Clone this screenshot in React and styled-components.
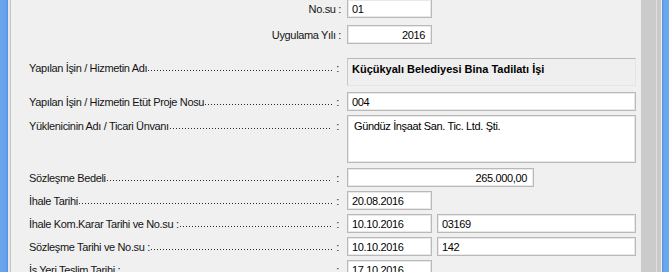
import React from 'react'
import styled, { createGlobalStyle } from 'styled-components'

const GlobalStyle = createGlobalStyle`
  html, body {
    margin: 0;
    padding: 0;
    overflow: hidden;
    background: #f0f0f0;
  }
  * { box-sizing: border-box; }
`

const Field = ({ label, children, top, height, align = 'center', labelTop = 0 }) => (
  <Row $top={top} $height={height} $align={align}>
    <LabelCell $labelTop={labelTop}>
      <LabelText>{label}</LabelText>
      <Dots />
      <Colon>:</Colon>
    </LabelCell>
    <Fields>{children}</Fields>
  </Row>
)

const App = () => {
  return (
    <Window>
      <GlobalStyle />
      <BlueFrame />
      <LeftEdge />
      <Content>
        <Row $top={-1} $height={19}>
          <RightLabel>No.su :</RightLabel>
          <Fields>
            <Input $w={85}>01</Input>
          </Fields>
        </Row>
        <Row $top={7} $height={19}>
          <RightLabel>Uygulama Yılı :</RightLabel>
          <Fields>
            <Input $w={85} $right>2016</Input>
          </Fields>
        </Row>

        <Field label="Yapılan İşin / Hizmetin Adı" top={14} height={28} align="flex-start" labelTop={4}>
          <Sunken>Küçükyalı Belediyesi Bina Tadilatı İşi</Sunken>
        </Field>

        <Field label="Yapılan İşin / Hizmetin Etüt Proje Nosu" top={6} height={19}>
          <Input $w={289}>004</Input>
        </Field>

        <Field label="Yüklenicinin Adı / Ticari Ünvanı" top={4} height={48} align="flex-start" labelTop={5}>
          <Input $w={289} $h={48} $top>Gündüz İnşaat San. Tic. Ltd. Şti.</Input>
        </Field>

        <Field label="Sözleşme Bedeli" top={5} height={19}>
          <Input $w={187} $right>265.000,00</Input>
        </Field>

        <Field label="İhale Tarihi" top={4} height={19}>
          <Input $w={85}>20.08.2016</Input>
        </Field>

        <Field label="İhale Kom.Karar Tarihi ve No.su :" top={4} height={19}>
          <Input $w={85}>10.10.2016</Input>
          <Input $w={199}>03169</Input>
        </Field>

        <Field label="Sözleşme Tarihi ve No.su :" top={4} height={19}>
          <Input $w={85}>10.10.2016</Input>
          <Input $w={199}>142</Input>
        </Field>

        <Field label="İş Yeri Teslim Tarihi :" top={4} height={19}>
          <Input $w={85}>17.10.2016</Input>
        </Field>
      </Content>
      <ScrollTrack />
      <RightEdge />
      <BlueFrame $right />
    </Window>
  )
}

const Window = styled.div`
  display: flex;
  width: 669px;
  height: 272px;
  overflow: hidden;
  background: #f0f0f0;
  font-family: "Liberation Sans", Arial, sans-serif;
  font-size: 11px;
  letter-spacing: -0.35px;
  color: #141414;
`

const BlueFrame = styled.div`
  flex: 0 0 ${({ $right }) => ($right ? '7px' : '8px')};
  background: ${({ $right }) =>
    $right
      ? 'linear-gradient(to right, #4f8fdf 0, #69a6ec 2px, #6aa7ed 100%)'
      : 'linear-gradient(to right, #6aa7ed 0, #66a3ea 6px, #4f8fdf 100%)'};
`

const LeftEdge = styled.div`
  flex: 0 0 3px;
  background: #e6e6e6;
  border-right: 1px solid #c3c3c3;
`

const Content = styled.div`
  flex: 1;
  display: flex;
  flex-direction: column;
  padding-left: 18px;
  min-width: 0;
`

const Row = styled.div`
  display: flex;
  align-items: ${({ $align }) => $align || 'center'};
  flex: 0 0 ${({ $height }) => $height}px;
  height: ${({ $height }) => $height}px;
  margin-top: ${({ $top }) => $top}px;
`

const LabelCell = styled.div`
  flex: 0 0 318px;
  display: flex;
  align-items: baseline;
  padding-right: 8px;
  margin-top: ${({ $labelTop }) => $labelTop}px;
  white-space: nowrap;
`

const LabelText = styled.span`
  flex: 0 0 auto;
`

const Dots = styled.span`
  flex: 1;
  align-self: stretch;
  margin: 0 4px 0 1px;
  background-image: linear-gradient(to right, #2a2a2a 1px, transparent 1px);
  background-size: 3px 1px;
  background-repeat: repeat-x;
  background-position: left bottom 3px;
`

const Colon = styled.span`
  flex: 0 0 auto;
`

const RightLabel = styled.div`
  flex: 0 0 318px;
  text-align: right;
  padding-right: 6px;
  white-space: nowrap;
`

const Fields = styled.div`
  display: flex;
  gap: 5px;
  height: 100%;
`

const Input = styled.div`
  width: ${({ $w }) => $w}px;
  height: ${({ $h }) => $h || 19}px;
  background: #fff;
  border: 1px solid #b9b9b9;
  box-shadow: inset 0 0 0 1px #e9e9e9;
  color: #000;
  display: flex;
  align-items: ${({ $top }) => ($top ? 'flex-start' : 'center')};
  justify-content: ${({ $right }) => ($right ? 'flex-end' : 'flex-start')};
  padding: ${({ $top }) => ($top ? '4px 4px 0 6px' : '0 6px 0 4px')};
  white-space: nowrap;
`

const Sunken = styled.div`
  width: 289px;
  height: 28px;
  background: #efefef;
  border-top: 1px solid #b8b8b8;
  border-left: 1px solid #c8c8c8;
  border-right: 1px solid #e4e4e4;
  border-bottom: 1px solid #e4e4e4;
  padding: 4px 4px 0 4px;
  font-weight: bold;
  letter-spacing: 0;
  color: #000;
  white-space: nowrap;
`

const ScrollTrack = styled.div`
  flex: 0 0 16px;
  background: #cbcbcb;
  border-right: 1px solid #dedede;
`

const RightEdge = styled.div`
  flex: 0 0 5px;
  background: #c9c9c9;
  border-right: 1px solid #eeeeee;
`

export default App
